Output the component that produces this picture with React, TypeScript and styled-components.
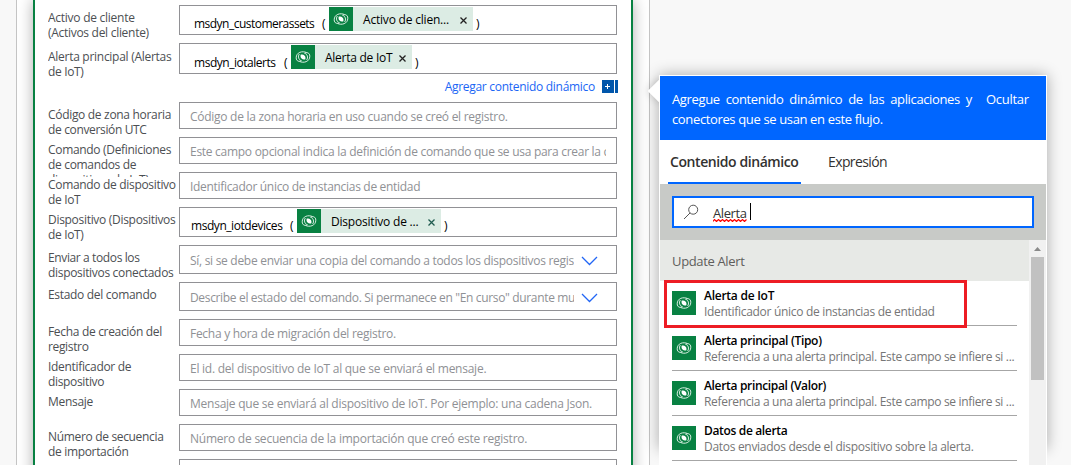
import React from 'react';
import styled, { createGlobalStyle } from 'styled-components';

const Global = createGlobalStyle`
  *, *::before, *::after { box-sizing: border-box; }
  html, body { margin: 0; height: 100%; overflow: hidden; }
  body {
    background: #f8f8f8;
    font-family: 'Open Sans', 'Noto Sans', sans-serif;
    font-size: 12px;
    color: #000;
  }
`;

const Page = styled.main`
  display: flex;
  align-items: flex-start;
  width: 1071px;
  height: 465px;
  padding-left: 16px;
  overflow: hidden;
`;

const Column = styled.section`
  width: 634px;
  height: 465px;
  padding: 0 16px;
  border: solid #c4c4c4;
  border-width: 0 1px;
  background: #fff;
  overflow: hidden;
`;

const Card = styled.div`
  width: 600px;
  height: 500px;
  padding: 5px 14px 0 13px;
  border: solid #088142;
  border-width: 0 2px;
  background: #fff;
  box-shadow: 0 0 14px rgba(0, 0, 0, 0.32);
`;

const Row = styled.div<{ $h: number }>`
  display: flex;
  height: ${(p) => p.$h}px;
  margin-bottom: 8px;
`;

const Label = styled.div<{ $top?: number }>`
  flex: none;
  width: 131px;
  height: 40px;
  padding-top: ${(p) => p.$top ?? 5}px;
  line-height: 15px;
  color: #4c4f53;
  white-space: pre;
  overflow: hidden;
`;

const Field = styled.div<{ $pad?: number }>`
  flex: none;
  display: flex;
  align-items: center;
  width: 438px;
  padding: 0 10px 0 ${(p) => p.$pad ?? 10}px;
  border: 1px solid #919195;
  background: #fff;
  white-space: nowrap;
`;

const Placeholder = styled.span`
  flex: 1;
  padding-top: 3px;
  color: #8f9195;
  line-height: 18px;
  overflow: hidden;
`;

const Chevron = styled.svg`
  flex: none;
  width: 17px;
  height: 10px;
  margin: 2px 8px 0 7px;
`;

const Fit = styled.span<{ $ls: number }>`
  letter-spacing: ${(p) => p.$ls}px;
`;

const Code = styled.span<{ $w?: number }>`
  flex: none;
  width: ${(p) => (p.$w ? `${p.$w}px` : 'auto')};
  padding-top: 8px;
  line-height: 16px;
`;

const Token = styled.span<{ $w: number }>`
  flex: none;
  display: flex;
  align-items: center;
  align-self: flex-start;
  width: ${(p) => p.$w}px;
  height: 24px;
  margin: 1px 3px 0 0;
  background: #dcece4;
`;

const TokenText = styled.span`
  flex: 1;
  padding: 1px 0 0 10px;
  line-height: 18px;
`;

const Cross = styled.svg`
  flex: none;
  width: 7px;
  height: 7px;
  margin: 2px 6px 0 0;
`;

const IconTile = styled.span`
  flex: none;
  display: grid;
  place-items: center;
  width: 24px;
  height: 24px;
  background: #088142;
`;

const AddRow = styled.div`
  display: flex;
  justify-content: flex-end;
  align-items: center;
  height: 20px;
  margin: -6px -1px 6px 0;
  color: #1a66f5;
`;

const AddBadge = styled.span`
  display: grid;
  place-items: center;
  width: 12px;
  height: 13px;
  margin-left: 7px;
  background: #0056ab;
`;

const AddEdge = styled.span`
  width: 3px;
  height: 13px;
  margin-left: 1px;
  background: #0056ab;
`;

const Callout = styled.aside`
  position: relative;
  width: 388px;
  height: 374px;
  margin: 75px 0 0 9px;
  background: #fff;
  box-shadow: 0 0 14px rgba(0, 0, 0, 0.32);
`;

const Beak = styled.span`
  position: absolute;
  left: -8px;
  top: 8px;
  width: 16px;
  height: 16px;
  background: #fff;
  transform: rotate(45deg);
  box-shadow: 0 0 8px rgba(0, 0, 0, 0.2);
`;

const Panel = styled.div`
  position: relative;
  width: 388px;
  height: 400px;
  padding: 1px 1px 0;
  background: #fff;
`;

const Banner = styled.header`
  display: flex;
  height: 64px;
  padding: 13px 17px 0 12px;
  background: #0066ff;
  color: #fff;
  font-size: 13px;
  line-height: 20px;
`;

const BannerText = styled.div`
  width: 300px;
  margin-right: 14px;
`;

const BannerLine = styled.div<{ $justify?: boolean }>`
  text-align-last: ${(p) => (p.$justify ? 'justify' : 'left')};
  white-space: nowrap;
`;

const Tabs = styled.nav`
  display: flex;
  height: 44px;
  padding-left: 8px;
  font-size: 14px;
`;

const Tab = styled.span<{ $active?: boolean }>`
  height: 44px;
  width: ${(p) => (p.$active ? '133px' : 'auto')};
  margin-right: 27px;
  padding: 12px 0 0 ${(p) => (p.$active ? 2 : 0)}px;
  border-bottom: 2px solid ${(p) => (p.$active ? '#0066ff' : 'transparent')};
  color: #323130;
  font-weight: ${(p) => (p.$active ? 600 : 400)};
  line-height: 20px;
  white-space: nowrap;
`;

const SearchArea = styled.div`
  height: 56px;
  padding: 12px;
  background: #c8cac7;
`;

const SearchBox = styled.div`
  display: flex;
  align-items: center;
  width: 362px;
  height: 32px;
  padding-left: 9px;
  border: 2px solid #0066ff;
  background: #fff;
  font-size: 13px;
  color: #333;
`;

const Query = styled.span`
  display: flex;
  flex-direction: column;
  width: 34px;
  margin: 3px 3px 0 14px;
  line-height: 16px;
`;

const Squiggle = styled.svg`
  display: block;
  flex: none;
  width: 34px;
  height: 3px;
  margin-top: -2px;
`;

const Caret = styled.span`
  width: 1px;
  height: 17px;
  margin-top: -1px;
  background: #000;
`;

const ListArea = styled.div`
  display: flex;
  height: 225px;
`;

const List = styled.div`
  width: 369px;
`;

const GroupTitle = styled.div`
  height: 41px;
  padding: 11px 12px 0;
  background: #e7e9e6;
  color: #605e5c;
  font-size: 13px;
  line-height: 20px;
`;

const Item = styled.div`
  display: flex;
  height: 45px;
  margin: 0 12px;
  padding-top: 10px;
  border-bottom: 1px solid #a6a6a6;
`;

const ItemText = styled.div`
  padding-left: 8px;
  margin-top: -3px;
  line-height: 16px;
  white-space: nowrap;
`;

const ItemTitle = styled.div`
  font-weight: 600;
  color: #000;
`;

const ItemSub = styled.div`
  color: #767676;
`;

const Scrollbar = styled.div`
  width: 17px;
  padding: 7px 2px 0;
  background: #f1f1f1;
`;

const ScrollUp = styled.svg`
  display: block;
  width: 7px;
  height: 4px;
  margin: 0 auto 6px;
`;

const Thumb = styled.div`
  height: 123px;
  background: #c1c1c1;
`;

const Highlight = styled.div`
  position: absolute;
  left: 5px;
  top: 205px;
  width: 303px;
  height: 48px;
  border: 3px solid #ed1c24;
`;

const swirl = 'M15.6 7.6C11.4 5.6 5.2 7.2 5.2 12.8c0 3.6 3.2 4.2 5.2 2.9C7.6 14.9 6.6 11.4 8.4 9';

const Dataverse = () => (
  <IconTile>
    <svg width="24" height="24" viewBox="0 0 24 24" fill="none" stroke="#d9eee2" strokeWidth="1">
      <path d={swirl} />
      <path d={swirl} transform="rotate(180 12 12)" />
      <path d="M9.8 9.6c2.3-.8 4.7.8 4.7 3.1 0 .6-.1 1.2-.3 1.7-2.3.8-4.7-.8-4.7-3.1 0-.6.1-1.2.3-1.7z" fill="#fff" stroke="none" />
    </svg>
  </IconTile>
);

type Fitted = [string, number];

type RowData = {
  h: number;
  label: Fitted[];
  top?: number;
  text?: Fitted;
  select?: boolean;
  token?: { name: string; ls: number; w: number; label: string; tls: number; tw: number; pad: number; color: string };
  add?: boolean;
};

const rows: RowData[] = [
  { h: 30, label: [['Activo de cliente', -0.26], ['(Activos del cliente)', -0.29]],
    token: { name: 'msdyn_customerassets', ls: -0.52, w: 128, label: 'Activo de clien...', tls: -0.2, tw: 144, pad: 14, color: '#222' } },
  { h: 31, add: true, top: 6, label: [['Alerta principal (Alertas', -0.28], ['de IoT)', -0.35]],
    token: { name: 'msdyn_iotalerts', ls: -0.47, w: 90, label: 'Alerta de IoT', tls: -0.26, tw: 121, pad: 14, color: '#222' } },
  { h: 27, label: [['Código de zona horaria', -0.31], ['de conversión UTC', -0.35]], text: ['Código de la zona horaria en uso cuando se creó el registro.', -0.27] },
  { h: 27, label: [['Comando (Definiciones', -0.32], ['de comandos de', -0.33], ['dispositivos de IoT)', -0.3]], text: ['Este campo opcional indica la definición de comando que se usa para crear la consulta', -0.28] },
  { h: 27, label: [['Comando de dispositivo', -0.32], ['de IoT', -0.35]], text: ['Identificador único de instancias de entidad', -0.31] },
  { h: 30, label: [['Dispositivo (Dispositivos', -0.3], ['de IoT)', -0.35]],
    token: { name: 'msdyn_iotdevices', ls: -0.45, w: 99, label: 'Dispositivo de ...', tls: -0.2, tw: 144, pad: 11, color: '#205c50' } },
  { h: 29, select: true, label: [['Enviar a todos los', -0.38], ['dispositivos conectados', -0.32]], text: ['Sí, si se debe enviar una copia del comando a todos los dispositivos registrados', -0.29] },
  { h: 29, select: true, label: [['Estado del comando', -0.31]], text: ['Describe el estado del comando. Si permanece en "En curso" durante mucho tiempo', -0.34] },
  { h: 27, label: [['Fecha de creación del', -0.32], ['registro', -0.35]], text: ['Fecha y hora de migración del registro.', -0.28] },
  { h: 27, label: [['Identificador de', -0.32], ['dispositivo', -0.35]], text: ['El id. del dispositivo de IoT al que se enviará el mensaje.', -0.25] },
  { h: 27, label: [['Mensaje', -0.3]], text: ['Mensaje que se enviará al dispositivo de IoT. Por ejemplo: una cadena Json.', -0.24] },
  { h: 27, label: [['Número de secuencia', -0.33], ['de importación', -0.33]], text: ['Número de secuencia de la importación que creó este registro.', -0.23] },
  { h: 27, label: [], text: ['', 0] },
];

const items: [string, number, string, number][] = [
  ['Alerta de IoT', -0.25, 'Identificador único de instancias de entidad', -0.3],
  ['Alerta principal (Tipo)', -0.3, 'Referencia a una alerta principal. Este campo se infiere si ...', -0.32],
  ['Alerta principal (Valor)', -0.33, 'Referencia a una alerta principal. Este campo se infiere si ...', -0.32],
  ['Datos de alerta', -0.34, 'Datos enviados desde el dispositivo sobre la alerta.', -0.3],
];

function FormRow({ row }: { row: RowData }) {
  const t = row.token;
  return (
    <>
      <Row $h={row.h}>
        <Label $top={row.top}>
          {row.label.map(([text, ls]) => (
            <div key={text}><Fit $ls={ls}>{text}</Fit></div>
          ))}
        </Label>
        {t && (
          <Field $pad={t.pad}>
            <Code $w={t.w}><Fit $ls={t.ls}>{t.name}</Fit></Code>
            <Code $w={7}>(</Code>
            <Token $w={t.tw}>
              <Dataverse />
              <TokenText><Fit $ls={t.tls}>{t.label}</Fit></TokenText>
              <Cross viewBox="0 0 7 7" stroke={t.color} strokeWidth="1.3"><path d="M.5.5l6 6M6.5.5l-6 6" /></Cross>
            </Token>
            <Code>)</Code>
          </Field>
        )}
        {row.text && (
          <Field>
            <Placeholder><Fit $ls={row.text[1]}>{row.text[0]}</Fit></Placeholder>
            {row.select && (
              <Chevron viewBox="0 0 17 10" fill="none" stroke="#2266f5" strokeWidth="1.3"><path d="M1 1l7.5 7.5L16 1" /></Chevron>
            )}
          </Field>
        )}
      </Row>
      {row.add && (
        <AddRow>
          <Fit $ls={-0.29}>Agregar contenido dinámico</Fit>
          <AddBadge>
            <svg width="6" height="5" viewBox="0 0 6 5" stroke="#fff" strokeWidth="1"><path d="M2.5 0v5M0 2.5h5" /></svg>
          </AddBadge>
          <AddEdge />
        </AddRow>
      )}
    </>
  );
}

export default function App() {
  return (
    <>
      <Global />
      <Page>
        <Column>
          <Card>
            {rows.map((row, i) => <FormRow key={i} row={row} />)}
          </Card>
        </Column>
        <Callout>
          <Beak />
          <Panel>
            <Banner>
              <BannerText>
                <BannerLine $justify><Fit $ls={-0.36}>Agregue contenido dinámico de las aplicaciones y</Fit></BannerLine>
                <BannerLine><Fit $ls={-0.36}>conectores que se usan en este flujo.</Fit></BannerLine>
              </BannerText>
              <Fit $ls={-0.3}>Ocultar</Fit>
            </Banner>
            <Tabs>
              <Tab $active><Fit $ls={-0.42}>Contenido dinámico</Fit></Tab>
              <Tab><Fit $ls={-0.6}>Expresión</Fit></Tab>
            </Tabs>
            <SearchArea>
              <SearchBox>
                <svg width="16" height="16" viewBox="0 0 16 16" fill="none" stroke="#555" strokeWidth="1"><circle cx="10.2" cy="5.7" r="4.5" /><path d="M7 9L1 15" /></svg>
                <Query>
                  <Fit $ls={-0.4}>Alerta</Fit>
                  <Squiggle viewBox="0 0 34 3" fill="none" stroke="#ff0000" strokeWidth="1.2"><path d="M0 2.5l1.5-2 2 2 2-2 2 2 2-2 2 2 2-2 2 2 2-2 2 2 2-2 2 2 2-2 2 2 2-2 2 2 2-2" /></Squiggle>
                </Query>
                <Caret />
              </SearchBox>
            </SearchArea>
            <ListArea>
              <List>
                <GroupTitle><Fit $ls={-0.35}>Update Alert</Fit></GroupTitle>
                {items.map(([title, tls, sub, sls]) => (
                  <Item key={title}>
                    <Dataverse />
                    <ItemText>
                      <ItemTitle><Fit $ls={tls}>{title}</Fit></ItemTitle>
                      <ItemSub><Fit $ls={sls}>{sub}</Fit></ItemSub>
                    </ItemText>
                  </Item>
                ))}
              </List>
              <Scrollbar>
                <ScrollUp viewBox="0 0 7 4"><path d="M0 4L3.5 0L7 4z" fill="#8a8a8a" /></ScrollUp>
                <Thumb />
              </Scrollbar>
            </ListArea>
            <Highlight />
          </Panel>
        </Callout>
      </Page>
    </>
  );
}
